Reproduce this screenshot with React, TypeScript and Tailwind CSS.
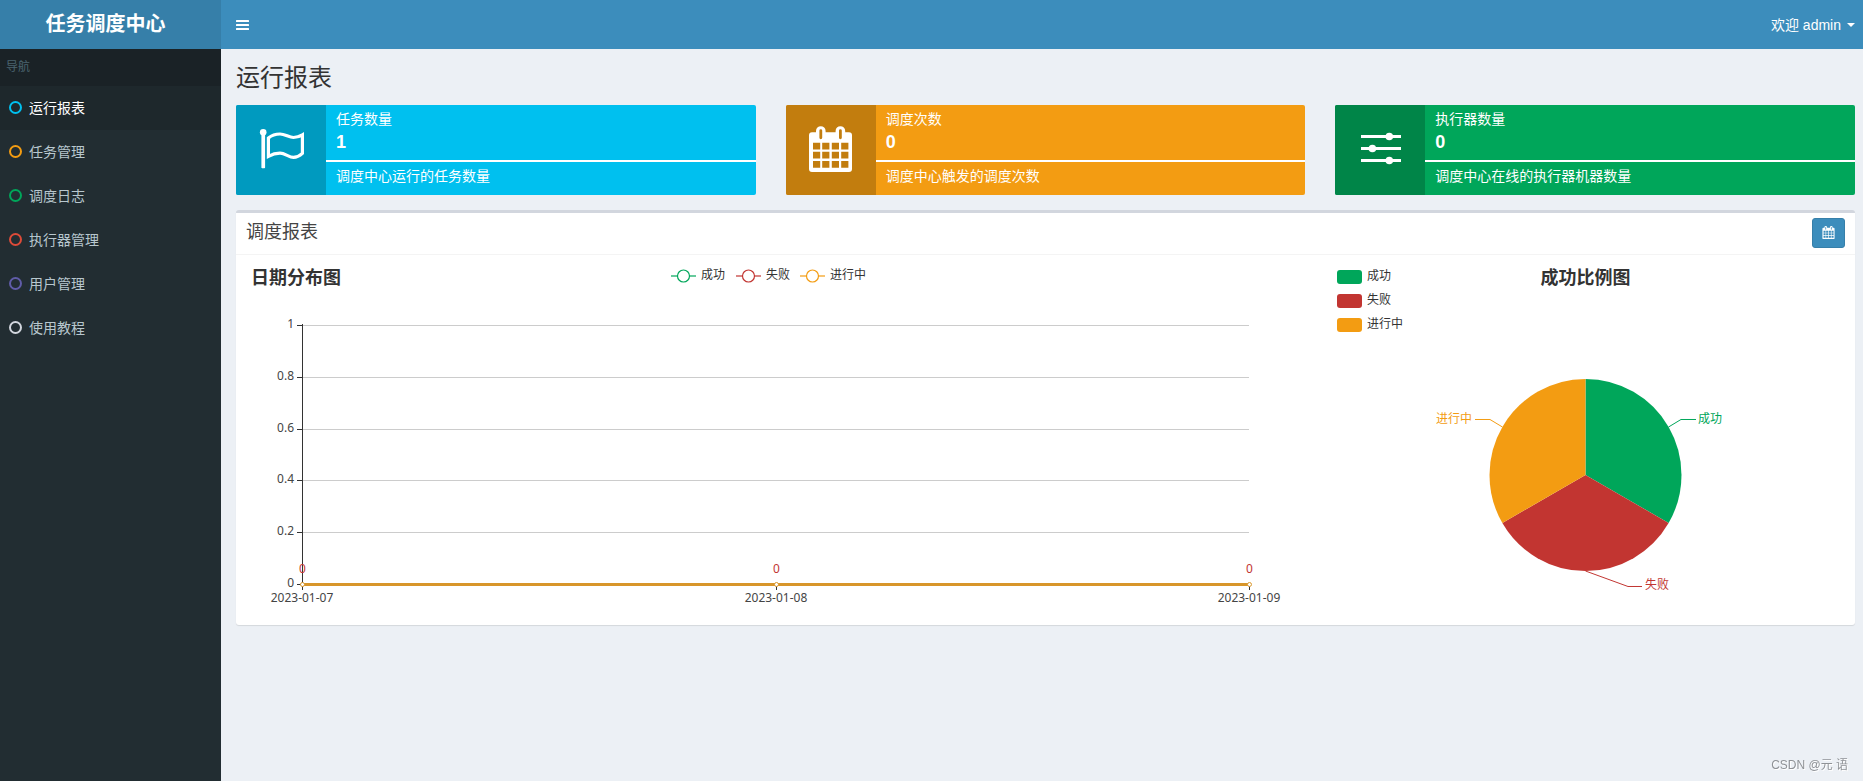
import React from 'react';

const SERIES = [
  { name: '成功', color: '#00a65a' },
  { name: '失败', color: '#c23531' },
  { name: '进行中', color: '#f39c12' },
];

const NAV = [
  { label: '运行报表', ring: 'border-[#00c0ef]', active: true },
  { label: '任务管理', ring: 'border-[#f39c12]' },
  { label: '调度日志', ring: 'border-[#00a65a]' },
  { label: '执行器管理', ring: 'border-[#dd4b39]' },
  { label: '用户管理', ring: 'border-[#605ca8]' },
  { label: '使用教程', ring: 'border-[#d2d6de]' },
];

function FlagIcon() {
  return (
    <svg viewBox="0 0 90 90" className="size-[90px]" aria-hidden="true">
      <circle cx="27.2" cy="27.3" r="3.3" fill="#fff" />
      <rect x="25.4" y="27" width="3.7" height="36.2" rx="0.8" fill="#fff" />
      <path
        d="M32.4 33 C36 30 40 29 44 29 C49 29 53 32.5 57.5 32.5 C61 32.5 64 31.2 66.4 29.8 V48.4 C64 50.6 61 52.4 57.5 52.4 C53 52.4 49 48.2 44 48.2 C40 48.2 36 49.4 32.4 51.4 Z"
        fill="none"
        stroke="#fff"
        strokeWidth="3.2"
      />
    </svg>
  );
}

function CalendarIcon({ viewBox, className }: { viewBox: string; className: string }) {
  const cols = [27, 36.2, 45.8, 55.2];
  const rows = [37.7, 46.7, 56];
  const cells = rows
    .map((y) => cols.map((x) => `M${x} ${y}h7.2v6.8h-7.2z`).join(''))
    .join('');
  return (
    <svg viewBox={viewBox} className={className} aria-hidden="true">
      <path
        fillRule="evenodd"
        fill="#fff"
        d={
          'M26 27.3H30V26a4.8 4.8 0 0 1 9.6 0V27.3H49.6V26a4.8 4.8 0 0 1 9.6 0V27.3H63a3 3 0 0 1 3 3V64a3 3 0 0 1-3 3H26a3 3 0 0 1-3-3V30.3a3 3 0 0 1 3-3z' +
          'M33.4 25.6v7.2a1.4 1.4 0 0 0 2.8 0v-7.2a1.4 1.4 0 0 0-2.8 0z' +
          'M53 25.6v7.2a1.4 1.4 0 0 0 2.8 0v-7.2a1.4 1.4 0 0 0-2.8 0z' +
          cells
        }
      />
    </svg>
  );
}

function SlidersIcon() {
  return (
    <svg viewBox="0 0 90 90" className="size-[90px]" fill="#fff" aria-hidden="true">
      <rect x="26" y="30" width="40" height="3" />
      <rect x="26" y="42" width="40" height="3" />
      <rect x="26" y="54" width="40" height="3" />
      <circle cx="54.3" cy="31.5" r="3.8" />
      <circle cx="37.4" cy="43.5" r="3.8" />
      <circle cx="54.3" cy="55.5" r="3.8" />
    </svg>
  );
}

const CARDS = [
  {
    label: '任务数量',
    value: '1',
    note: '调度中心运行的任务数量',
    bg: 'bg-[#00c0ef]',
    iconBg: 'bg-[#009abf]',
    icon: <FlagIcon />,
  },
  {
    label: '调度次数',
    value: '0',
    note: '调度中心触发的调度次数',
    bg: 'bg-[#f39c12]',
    iconBg: 'bg-[#c27d0e]',
    icon: <CalendarIcon viewBox="0 0 90 90" className="size-[90px]" />,
  },
  {
    label: '执行器数量',
    value: '0',
    note: '调度中心在线的执行器机器数量',
    bg: 'bg-[#00a65a]',
    iconBg: 'bg-[#008548]',
    icon: <SlidersIcon />,
  },
];

const CHART_FONT = "font-['Noto_Sans','Noto_Sans_CJK_SC',sans-serif]";

function LineChart() {
  const ticks = [
    { y: 60, label: '1' },
    { y: 112, label: '0.8' },
    { y: 164, label: '0.6' },
    { y: 215, label: '0.4' },
    { y: 267, label: '0.2' },
    { y: 319, label: '0' },
  ];
  const days = [
    { x: 56, label: '2023-01-07' },
    { x: 530, label: '2023-01-08' },
    { x: 1003, label: '2023-01-09' },
  ];
  const legend = [425, 490, 554];
  return (
    <svg viewBox="0 0 1056 350" className={`block w-full overflow-visible ${CHART_FONT}`} role="img" aria-label="日期分布图">
      <text x="5" y="19" fontSize="18" fontWeight="bold" fill="#333">日期分布图</text>
      {SERIES.map((s, i) => (
        <g key={s.name}>
          <path d={`M${legend[i]} 11h25`} stroke={s.color} strokeWidth="1.2" />
          <circle cx={legend[i] + 12.5} cy="11" r="6" fill="#fff" stroke={s.color} strokeWidth="1.2" />
          <text x={legend[i] + 30} y="14" fontSize="12" fill="#333">{s.name}</text>
        </g>
      ))}
      <g shapeRendering="crispEdges">
        {ticks.slice(0, 5).map((t) => (
          <path key={t.label} d={`M56 ${t.y + 0.5}H1003`} stroke="#ccc" />
        ))}
        {ticks.map((t) => (
          <path key={t.label} d={`M51 ${t.y + 0.5}H56`} stroke="#333" />
        ))}
        {days.map((d) => (
          <path key={d.label} d={`M${d.x + 0.5} 319V325`} stroke="#333" />
        ))}
        <path d="M56.5 59V319" stroke="#333" />
      </g>
      {ticks.map((t) => (
        <text key={t.label} x="48" y={t.y + 3} fontSize="12" fill="#444" textAnchor="end">{t.label}</text>
      ))}
      <path d="M56 319.5H1003" stroke="#d8962a" strokeWidth="3" />
      {days.map((d) => (
        <g key={d.label} textAnchor="middle" fontSize="12">
          <circle cx={d.x + 0.5} cy="319.5" r="2" fill="#fff" stroke="#d8962a" />
          <text x={d.x + 0.5} y="308" fill="#c23531">0</text>
          <text x={d.x} y="337" fill="#444">{d.label}</text>
        </g>
      ))}
    </svg>
  );
}

function PieChart() {
  return (
    <svg viewBox="0 0 513 350" className={`block w-full overflow-visible ${CHART_FONT}`} role="img" aria-label="成功比例图">
      {SERIES.map((s, i) => (
        <g key={s.name}>
          <rect x="5" y={5 + i * 24} width="25" height="14" rx="3" fill={s.color} />
          <text x="35" y={15 + i * 24} fontSize="12" fill="#333">{s.name}</text>
        </g>
      ))}
      <text x="253.5" y="19" fontSize="18" fontWeight="bold" fill="#333" textAnchor="middle">成功比例图</text>
      <path d="M253.5 210V114A96 96 0 0 1 336.64 258Z" fill="#00a65a" />
      <path d="M253.5 210L336.64 258A96 96 0 0 1 170.36 258Z" fill="#c23531" />
      <path d="M253.5 210L170.36 258A96 96 0 0 1 253.5 114Z" fill="#f39c12" />
      <g fill="none">
        <path d="M336.6 162L349 154.5H364" stroke="#00a65a" />
        <path d="M170.4 162L158 154.5H143" stroke="#f39c12" />
        <path d="M253.5 306L296 321.5H310" stroke="#c23531" />
      </g>
      <g fontSize="12">
        <text x="366" y="158" fill="#00a65a">成功</text>
        <text x="140" y="158" fill="#f39c12" textAnchor="end">进行中</text>
        <text x="313" y="324" fill="#c23531">失败</text>
      </g>
    </svg>
  );
}

export default function App() {
  return (
    <div className="flex min-h-screen flex-col bg-[#ecf0f5] font-['Liberation_Sans','Noto_Sans_CJK_SC',sans-serif] text-sm text-[#333]">
      <header className="flex h-[49px] bg-[#3c8dbc] text-white">
        <a href="#home" className="flex w-[221px] shrink-0 items-center justify-center bg-[#367fa9] pr-2.5 pb-px text-xl font-bold">
          任务调度中心
        </a>
        <nav className="flex flex-1 items-center justify-between pr-2 pb-1 pl-[15px]">
          <button type="button" aria-label="切换导航">
            <svg viewBox="0 0 13 10" className="mt-1 h-2.5 w-[13px]" fill="#fff" aria-hidden="true">
              <rect y="0" width="13" height="2" rx="0.5" />
              <rect y="4" width="13" height="2" rx="0.5" />
              <rect y="8" width="13" height="2" rx="0.5" />
            </svg>
          </button>
          <button type="button" className="flex items-center gap-1.5 pt-1 leading-5">
            欢迎 admin
            <span className="border-x-4 border-t-4 border-x-transparent border-t-white" />
          </button>
        </nav>
      </header>

      <div className="flex flex-1">
        <aside className="w-[221px] shrink-0 bg-[#222d32]">
          <h2 className="bg-[#1a2226] px-1.5 pt-2.5 pb-[11px] text-xs text-[#4b646f]">导航</h2>
          <ul>
            {NAV.map((item) => (
              <li key={item.label}>
                <a
                  href="#nav"
                  className={`flex h-11 items-center gap-[7px] pb-px pl-[9px] leading-5 ${
                    item.active ? 'bg-[#1e282c] text-white' : 'text-[#b8c7ce]'
                  }`}
                >
                  <span className={`size-[13px] rounded-full border-2 ${item.ring}`} />
                  {item.label}
                </a>
              </li>
            ))}
          </ul>
        </aside>

        <main className="min-w-0 flex-1 pr-2 pl-[15px]">
          <h1 className="pt-[17px] pb-[15px] text-2xl leading-6">运行报表</h1>

          <section className="grid grid-cols-3 gap-[30px]">
            {CARDS.map((c) => (
              <article key={c.label} className={`flex overflow-hidden rounded-xs text-white ${c.bg}`}>
                <div className={`h-[90px] w-[90px] shrink-0 ${c.iconBg}`}>{c.icon}</div>
                <div className="min-w-0 flex-1">
                  <p className="px-2.5 pt-1 leading-5">{c.label}</p>
                  <p className="px-2.5 pt-px text-lg leading-6 font-bold">{c.value}</p>
                  <div className="mt-1.5 mb-1 h-0.5 bg-white" />
                  <p className="px-2.5 leading-5">{c.note}</p>
                </div>
              </article>
            ))}
          </section>

          <section className="mt-[15px] rounded-[3px] border-t-3 border-[#d2d6de] bg-white shadow-[0_1px_1px_rgba(0,0,0,0.1)]">
            <div className="flex h-[42px] items-center justify-between border-b border-[#f4f4f4] px-2.5">
              <h2 className="pb-1 text-lg leading-5 text-[#444]">调度报表</h2>
              <button
                type="button"
                aria-label="选择日期"
                className="mb-0.5 flex h-[30px] w-[33px] items-center justify-center rounded-[3px] border border-[#367fa9] bg-[#3c8dbc]"
              >
                <CalendarIcon viewBox="22 21 45 46" className="size-[13px]" />
              </button>
            </div>
            <div className="p-2.5">
              <div className="-mx-[15px] flex">
                <div className="w-2/3 px-[15px]">
                  <LineChart />
                </div>
                <div className="w-1/3 px-[15px]">
                  <PieChart />
                </div>
              </div>
            </div>
          </section>
        </main>
      </div>

      <p className="fixed right-[15px] bottom-2 text-xs leading-4 text-[#8f9296] [text-shadow:1px_1px_0_#fff]">
        CSDN @元 语
      </p>
    </div>
  );
}
